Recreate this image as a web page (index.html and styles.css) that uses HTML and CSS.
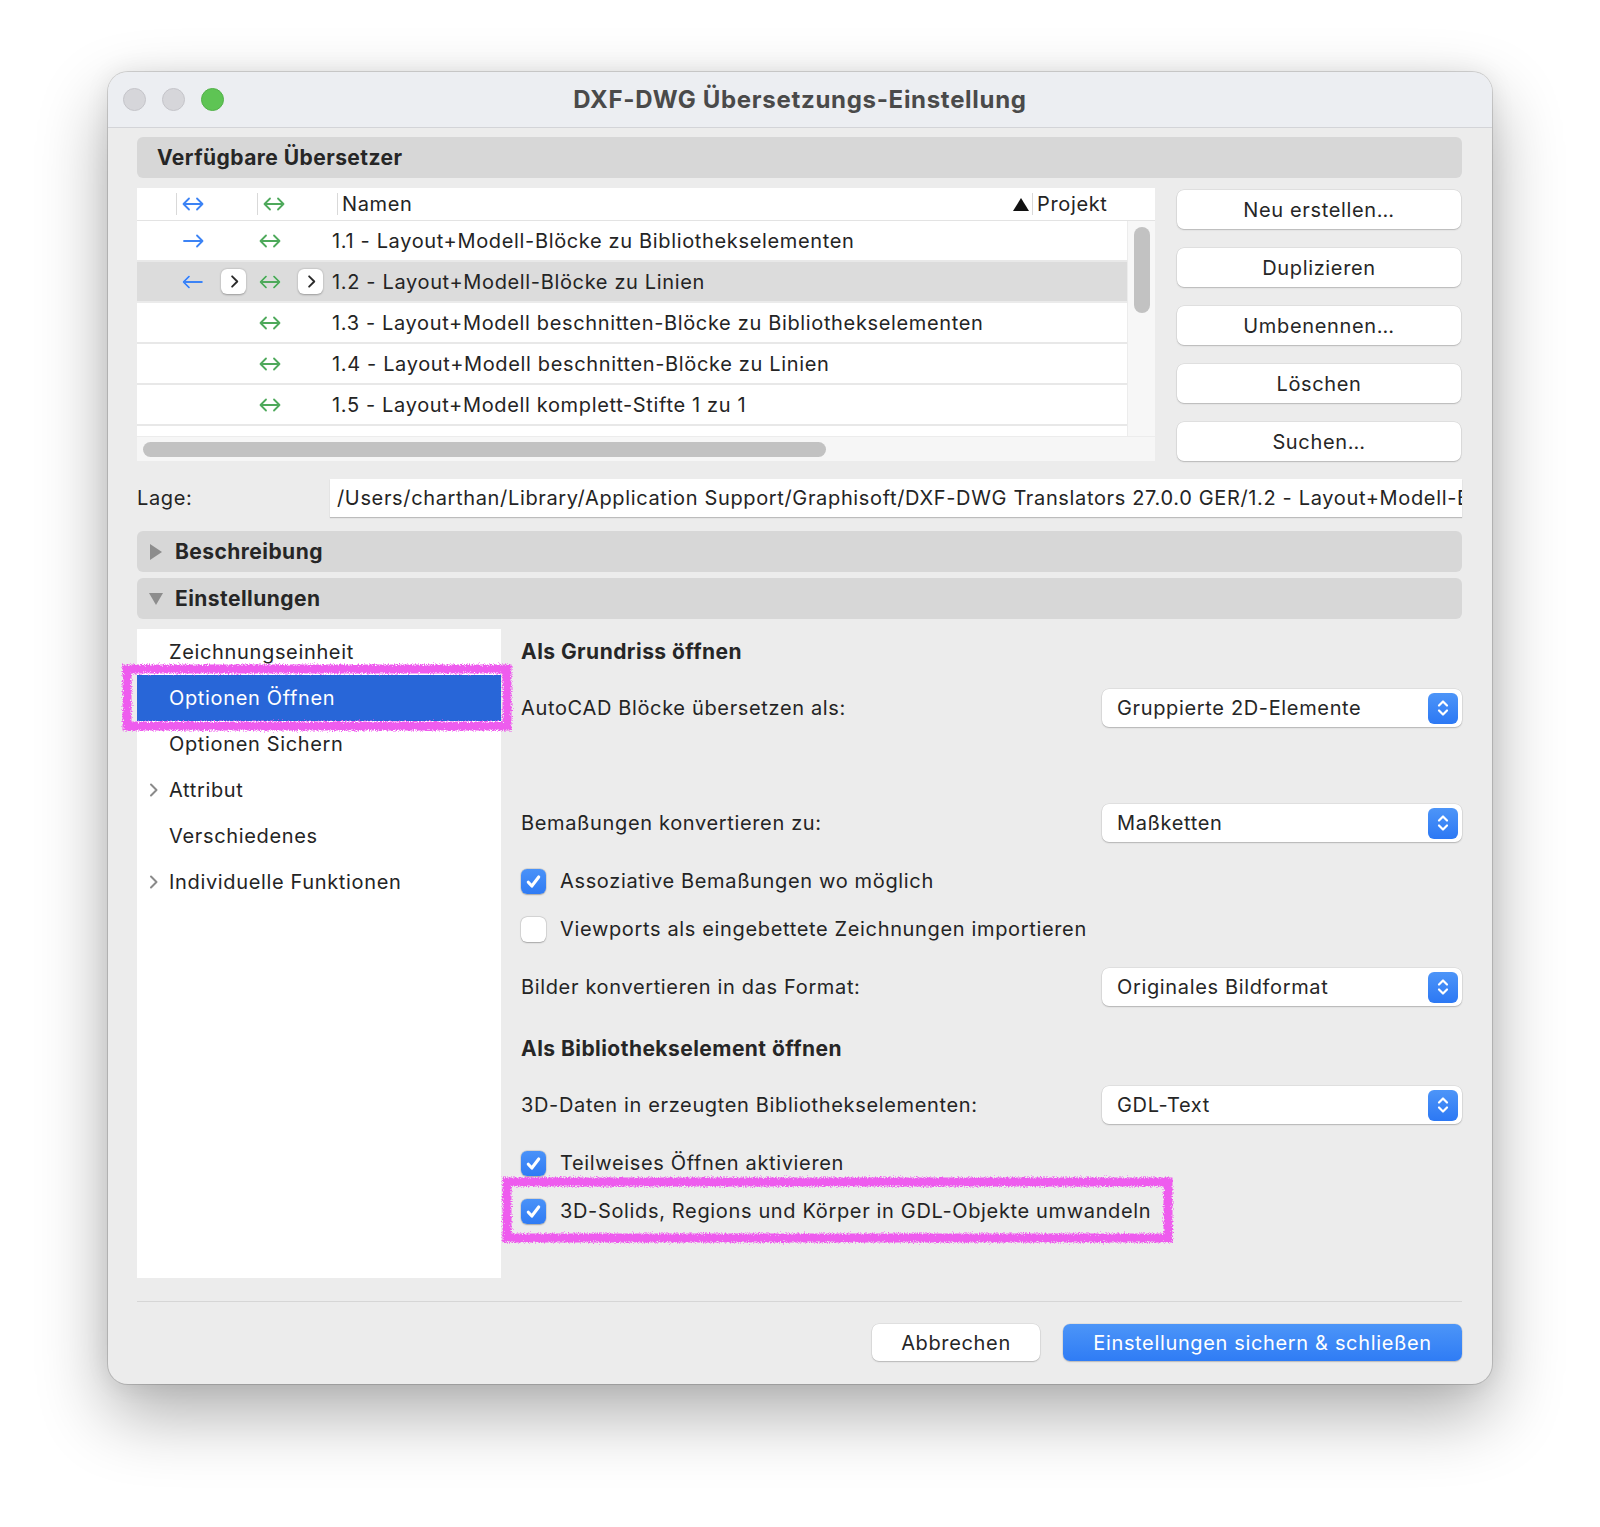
FILE: index.html
```html
<!DOCTYPE html>
<html>
<head>
    <title>DXF-DWG Übersetzungs-Einstellung</title>
    <link rel="stylesheet" href="styles.css">
</head>
<body>
    <!-- shared icons -->
    <svg class="icon-defs" xmlns="http://www.w3.org/2000/svg">
        <symbol id="i-both" viewBox="0 0 24 14">
            <path d="M2.5 7h19M8 1.5 2.5 7 8 12.5M16 1.5 21.5 7 16 12.5" fill="none" stroke="currentColor" stroke-width="1.8" stroke-linecap="round" stroke-linejoin="round"/>
        </symbol>
        <symbol id="i-right" viewBox="0 0 24 14">
            <path d="M3 7h18.5M16 1.5 21.5 7 16 12.5" fill="none" stroke="currentColor" stroke-width="1.8" stroke-linecap="round" stroke-linejoin="round"/>
        </symbol>
        <symbol id="i-left" viewBox="0 0 24 14">
            <path d="M2.5 7H21M8 1.5 2.5 7 8 12.5" fill="none" stroke="currentColor" stroke-width="1.8" stroke-linecap="round" stroke-linejoin="round"/>
        </symbol>
        <symbol id="i-chev" viewBox="0 0 10 16">
            <path d="M3 2.5 8.5 8 3 13.5" fill="none" stroke="currentColor" stroke-width="2" stroke-linecap="round" stroke-linejoin="round"/>
        </symbol>
        <symbol id="i-updown" viewBox="0 0 16 24">
            <path d="M4 9.5 8 5.5l4 4M4 14.5l4 4 4-4" fill="none" stroke="currentColor" stroke-width="2.2" stroke-linecap="round" stroke-linejoin="round"/>
        </symbol>
        <symbol id="i-check" viewBox="0 0 16 16">
            <path d="M3.6 8.6 6.6 11.8 12.4 4.2" fill="none" stroke="currentColor" stroke-width="2.6" stroke-linecap="round" stroke-linejoin="round"/>
        </symbol>
    </svg>

    <div class="window">
        <div class="titlebar">
            <div class="traffic">
                <span class="light"></span>
                <span class="light"></span>
                <span class="light green"></span>
            </div>
            <div class="title">DXF-DWG Übersetzungs-Einstellung</div>
        </div>

        <div class="content">
            <div class="group-header">Verfügbare Übersetzer</div>

            <div class="translators">
                <div class="table">
                    <div class="thead">
                        <span class="th th-a"><i class="colsep"></i><svg class="arrow blue"><use href="#i-both"/></svg></span>
                        <span class="th th-b"><i class="colsep"></i><svg class="arrow green"><use href="#i-both"/></svg></span>
                        <span class="th th-name"><i class="colsep"></i>Namen</span>
                        <span class="th th-proj"><span class="sort-up"></span><i class="colsep"></i>Projekt</span>
                    </div>
                    <div class="rows-view">
                        <div class="rows">
                            <div class="row">
                                <span class="cell cell-a"><svg class="arrow blue"><use href="#i-right"/></svg></span>
                                <span class="cell cell-b"><svg class="arrow green"><use href="#i-both"/></svg></span>
                                <span class="cell cell-name">1.1 - Layout+Modell-Blöcke zu Bibliothekselementen</span>
                            </div>
                            <div class="row selected">
                                <span class="cell cell-a"><svg class="arrow blue"><use href="#i-left"/></svg><span class="mini-btn"><svg><use href="#i-chev"/></svg></span></span>
                                <span class="cell cell-b"><svg class="arrow green"><use href="#i-both"/></svg><span class="mini-btn"><svg><use href="#i-chev"/></svg></span></span>
                                <span class="cell cell-name">1.2 - Layout+Modell-Blöcke zu Linien</span>
                            </div>
                            <div class="row">
                                <span class="cell cell-a"></span>
                                <span class="cell cell-b"><svg class="arrow green"><use href="#i-both"/></svg></span>
                                <span class="cell cell-name">1.3 - Layout+Modell beschnitten-Blöcke zu Bibliothekselementen</span>
                            </div>
                            <div class="row">
                                <span class="cell cell-a"></span>
                                <span class="cell cell-b"><svg class="arrow green"><use href="#i-both"/></svg></span>
                                <span class="cell cell-name">1.4 - Layout+Modell beschnitten-Blöcke zu Linien</span>
                            </div>
                            <div class="row">
                                <span class="cell cell-a"></span>
                                <span class="cell cell-b"><svg class="arrow green"><use href="#i-both"/></svg></span>
                                <span class="cell cell-name">1.5 - Layout+Modell komplett-Stifte 1 zu 1</span>
                            </div>
                            <div class="row">
                                <span class="cell cell-a"></span>
                                <span class="cell cell-b"><svg class="arrow green"><use href="#i-both"/></svg></span>
                                <span class="cell cell-name">1.6 - Layout+Modell komplett-Blöcke zu Bibliothekselementen</span>
                            </div>
                        </div>
                        <div class="vscroll"><span class="vthumb"></span></div>
                    </div>
                    <div class="hscroll"><span class="hthumb"></span></div>
                </div>

                <div class="side-buttons">
                    <button class="btn">Neu erstellen…</button>
                    <button class="btn">Duplizieren</button>
                    <button class="btn">Umbenennen…</button>
                    <button class="btn">Löschen</button>
                    <button class="btn">Suchen…</button>
                </div>
            </div>

            <div class="location">
                <span class="location-label">Lage:</span>
                <div class="location-field">/Users/charthan/Library/Application Support/Graphisoft/DXF-DWG Translators 27.0.0 GER/1.2 - Layout+Modell-Blöcke zu Linien</div>
            </div>

            <div class="group-header collapsible closed">Beschreibung</div>
            <div class="group-header collapsible open">Einstellungen</div>

            <div class="settings">
                <ul class="nav">
                    <li class="nav-item"><span class="twisty"></span>Zeichnungseinheit</li>
                    <li class="nav-item active"><span class="twisty"></span>Optionen Öffnen</li>
                    <li class="nav-item"><span class="twisty"></span>Optionen Sichern</li>
                    <li class="nav-item"><span class="twisty"><svg><use href="#i-chev"/></svg></span>Attribut</li>
                    <li class="nav-item"><span class="twisty"></span>Verschiedenes</li>
                    <li class="nav-item"><span class="twisty"><svg><use href="#i-chev"/></svg></span>Individuelle Funktionen</li>
                </ul>

                <div class="pane">
                    <div class="pane-title">Als Grundriss öffnen</div>

                    <div class="field gap-head">
                        <span>AutoCAD Blöcke übersetzen als:</span>
                        <div class="popup">Gruppierte 2D-Elemente<span class="stepper"><svg><use href="#i-updown"/></svg></span></div>
                    </div>

                    <div class="field gap-empty">
                        <span>Bemaßungen konvertieren zu:</span>
                        <div class="popup">Maßketten<span class="stepper"><svg><use href="#i-updown"/></svg></span></div>
                    </div>

                    <label class="check gap-m">
                        <span class="box checked"><svg><use href="#i-check"/></svg></span>
                        Assoziative Bemaßungen wo möglich
                    </label>
                    <label class="check gap-s">
                        <span class="box"></span>
                        Viewports als eingebettete Zeichnungen importieren
                    </label>

                    <div class="field gap-m">
                        <span>Bilder konvertieren in das Format:</span>
                        <div class="popup">Originales Bildformat<span class="stepper"><svg><use href="#i-updown"/></svg></span></div>
                    </div>

                    <div class="pane-title gap-m">Als Bibliothekselement öffnen</div>

                    <div class="field gap-head">
                        <span>3D-Daten in erzeugten Bibliothekselementen:</span>
                        <div class="popup">GDL-Text<span class="stepper"><svg><use href="#i-updown"/></svg></span></div>
                    </div>

                    <label class="check gap-m">
                        <span class="box checked"><svg><use href="#i-check"/></svg></span>
                        Teilweises Öffnen aktivieren
                    </label>
                    <label class="check gap-s">
                        <span class="box checked"><svg><use href="#i-check"/></svg></span>
                        3D-Solids, Regions und Körper in GDL-Objekte umwandeln
                    </label>
                </div>

                <!-- hand drawn highlight marks -->
                <svg class="marks" xmlns="http://www.w3.org/2000/svg">
                    <defs>
                        <filter id="rough" x="-5%" y="-20%" width="110%" height="140%">
                            <feTurbulence type="fractalNoise" baseFrequency="0.8" numOctaves="2" seed="3" result="noise"/>
                            <feDisplacementMap in="SourceGraphic" in2="noise" scale="6"/>
                        </filter>
                    </defs>
                    <rect x="-10" y="40" width="380" height="57" fill="none" stroke="#ee5bee" stroke-width="9" filter="url(#rough)"/>
                    <rect x="370" y="553" width="661" height="56" fill="none" stroke="#ee5bee" stroke-width="9" filter="url(#rough)"/>
                </svg>
            </div>

            <div class="footer">
                <button class="btn">Abbrechen</button>
                <button class="btn primary">Einstellungen sichern &amp; schließen</button>
            </div>
        </div>
    </div>
</body>
</html>
```

FILE: styles.css
```css
* {
    margin: 0;
    padding: 0;
    box-sizing: border-box;
}

body {
    background-color: #ffffff;
    font-family: Inter, "Noto Sans", sans-serif;
    font-size: 20px;
    letter-spacing: 0.65px;
    color: #242424;
    min-height: 1527px;
    padding: 72px 0 0 108px;
}

.icon-defs {
    position: absolute;
    width: 0;
    height: 0;
}

button {
    font-family: inherit;
    font-size: inherit;
    letter-spacing: inherit;
    color: inherit;
    border: none;
}

/* ========== Window ========== */
.window {
    width: 1384px;
    background-color: #ececec;
    border-radius: 20px;
    overflow: hidden;
    box-shadow: 0 0 0 1px rgba(0, 0, 0, 0.14), 0 30px 70px rgba(0, 0, 0, 0.32), 0 0 24px rgba(0, 0, 0, 0.08);
}

.titlebar {
    height: 56px;
    background-color: #eceef2;
    border-bottom: 1px solid #d3d4d8;
    display: grid;
    grid-template-columns: 1fr auto 1fr;
    align-items: center;
}

.traffic {
    display: flex;
    gap: 16px;
    padding-left: 15px;
}

.light {
    width: 23px;
    height: 23px;
    border-radius: 50%;
    background-color: #d6d6da;
    border: 1px solid #c4c4c9;
}

.light.green {
    background-color: #5ec454;
    border-color: #52b149;
}

.title {
    font-size: 24px;
    font-weight: 700;
    letter-spacing: 0.7px;
    color: #4a4a4a;
}

.content {
    padding: 9px 30px 23px 29px;
}

/* ========== Group headers ========== */
.group-header {
    height: 41px;
    background-color: #d7d7d7;
    border-radius: 6px;
    display: flex;
    align-items: center;
    padding-left: 20px;
    font-size: 21px;
    font-weight: 700;
    letter-spacing: 0.45px;
    color: #262626;
}

.group-header.collapsible {
    padding-left: 12px;
    margin-top: 6px;
}

.group-header.collapsible::before {
    content: "";
    width: 0;
    height: 0;
    margin-right: 14px;
}

.group-header.closed {
    margin-top: 14px;
}

.group-header.closed::before {
    border-top: 8px solid transparent;
    border-bottom: 8px solid transparent;
    border-left: 12px solid #8d8d8d;
    margin-left: 1px;
    margin-right: 13px;
}

.group-header.open::before {
    border-left: 7.5px solid transparent;
    border-right: 7.5px solid transparent;
    border-top: 12px solid #8d8d8d;
    margin-right: 12px;
}

/* ========== Translator table ========== */
.translators {
    display: flex;
    gap: 22px;
    margin-top: 10px;
}

.table {
    width: 1018px;
    height: 273px;
    background-color: #f6f6f6;
    display: flex;
    flex-direction: column;
}

.thead {
    height: 33px;
    background-color: #ffffff;
    border-bottom: 1px solid #e3e3e3;
    display: flex;
    align-items: center;
    padding-left: 39px;
}

.th {
    display: flex;
    align-items: center;
    height: 100%;
}

.colsep {
    width: 1px;
    height: 22px;
    background-color: #d9d9d9;
    margin-right: 4px;
}

.th-a { width: 81px; }
.th-b { width: 80px; }
.th-name { flex: 1; }

.th-proj {
    width: 142px;
}

.sort-up {
    width: 0;
    height: 0;
    border-left: 8.5px solid transparent;
    border-right: 8.5px solid transparent;
    border-bottom: 13px solid #111111;
    margin-right: 3px;
}

.arrow {
    width: 24px;
    height: 14px;
    flex-shrink: 0;
}

.arrow.blue { color: #3c83f5; }
.arrow.green { color: #4ea95b; }

.rows-view {
    display: flex;
    height: 215px;
}

.rows {
    flex: 1;
    overflow: hidden;
    background-color: #ffffff;
}

.row {
    height: 41px;
    border-bottom: 2px solid #e8e8e8;
    display: flex;
    align-items: center;
    padding-left: 44px;
    white-space: nowrap;
}

.row.selected {
    background-color: #dcdcdc;
    border-bottom-color: #ebebeb;
}

.row.selected .arrow {
    filter: drop-shadow(0 0 0.7px #ffffff) drop-shadow(0 0 0.7px #ffffff);
}

/* the half hidden row under the fold */
.row:last-child .cell-name {
    margin-bottom: 3px;
}

.cell {
    display: flex;
    align-items: center;
    gap: 16px;
}

.cell-a { width: 76px; }
.cell-b { width: 75px; }

.cell-b .arrow { margin-left: 1px; }

.mini-btn {
    width: 25px;
    height: 25px;
    border-radius: 6px;
    background-color: #ffffff;
    box-shadow: 0 0.5px 2px rgba(0, 0, 0, 0.3);
    display: flex;
    align-items: center;
    justify-content: center;
    color: #2a2a2a;
}

.mini-btn svg {
    width: 10px;
    height: 15px;
}

.vscroll {
    width: 28px;
    background-color: #f7f7f7;
    border-left: 1px solid #ececec;
    padding: 6px 0 0 6px;
}

.vthumb {
    display: block;
    width: 16px;
    height: 86px;
    border-radius: 8px;
    background-color: #c2c2c2;
}

.hscroll {
    height: 25px;
    padding: 5px 0 0 6px;
    border-top: 1px solid #ececec;
}

.hthumb {
    display: block;
    width: 683px;
    height: 15px;
    border-radius: 8px;
    background-color: #c2c2c2;
}

.side-buttons {
    width: 284px;
    display: flex;
    flex-direction: column;
    gap: 19px;
    padding-top: 2px;
}

.btn {
    height: 39px;
    background-color: #ffffff;
    border-radius: 7px;
    box-shadow: 0 1px 1.5px rgba(0, 0, 0, 0.18), 0 0 0 0.5px rgba(0, 0, 0, 0.1);
    color: #262626;
}

/* ========== Location ========== */
.location {
    display: flex;
    align-items: center;
    margin-top: 18px;
}

.location-label {
    width: 193px;
}

.location-field {
    flex: 1;
    height: 38px;
    background-color: #ffffff;
    box-shadow: 0 1px 1px rgba(0, 0, 0, 0.2);
    padding: 0 0 0 7px;
    line-height: 38px;
    white-space: nowrap;
    overflow: hidden;
}

/* ========== Settings ========== */
.settings {
    position: relative;
    height: 649px;
    margin-top: 10px;
    display: flex;
    gap: 20px;
}

.nav {
    width: 364px;
    background-color: #ffffff;
    list-style: none;
}

.nav-item {
    height: 46px;
    display: flex;
    align-items: center;
}

.nav-item.active {
    background-color: #2866d8;
    color: #ffffff;
}

.twisty {
    width: 32px;
    padding-left: 11px;
    display: flex;
    color: #8a8a8a;
}

.twisty svg {
    width: 10px;
    height: 16px;
}

.pane {
    flex: 1;
    display: flex;
    flex-direction: column;
}

.pane-title {
    height: 44px;
    display: flex;
    align-items: center;
    font-size: 21px;
    font-weight: 700;
    letter-spacing: 0.45px;
    color: #262626;
}

.field {
    height: 38px;
    display: flex;
    align-items: center;
    justify-content: space-between;
}

.check {
    height: 38px;
    display: flex;
    align-items: center;
    gap: 14px;
}

.gap-head { margin-top: 16px; }
.gap-empty { margin-top: 77px; }
.gap-m { margin-top: 20px; }
.gap-s { margin-top: 10px; }

.popup {
    width: 360px;
    height: 38px;
    background-color: #ffffff;
    border-radius: 7px;
    box-shadow: 0 1px 1.5px rgba(0, 0, 0, 0.2), 0 0 0 0.5px rgba(0, 0, 0, 0.1);
    display: flex;
    align-items: center;
    justify-content: space-between;
    padding: 0 4px 0 15px;
    color: #262626;
}

.stepper {
    width: 30px;
    height: 31px;
    border-radius: 6px;
    background: linear-gradient(#4d95f8, #2c78f4);
    color: #ffffff;
    display: flex;
    align-items: center;
    justify-content: center;
}

.stepper svg {
    width: 16px;
    height: 24px;
}

.box {
    width: 25px;
    height: 25px;
    border-radius: 6px;
    background-color: #ffffff;
    box-shadow: 0 0.5px 1.5px rgba(0, 0, 0, 0.25), 0 0 0 0.5px rgba(0, 0, 0, 0.12);
    display: flex;
    align-items: center;
    justify-content: center;
}

.box.checked {
    background: linear-gradient(#4a92f8, #2f7bf4);
    color: #ffffff;
}

.box svg {
    width: 19px;
    height: 19px;
}

.marks {
    position: absolute;
    left: 0;
    top: 0;
    width: 100%;
    height: 100%;
    overflow: visible;
    pointer-events: none;
}

/* ========== Footer ========== */
.footer {
    margin-top: 23px;
    border-top: 1px solid #d6d6d6;
    padding-top: 22px;
    display: flex;
    justify-content: flex-end;
    gap: 23px;
}

.footer .btn {
    height: 37px;
    width: 168px;
}

.footer .btn.primary {
    width: 399px;
    background: linear-gradient(#4c95f8, #2f7cf5);
    color: #ffffff;
}
```
